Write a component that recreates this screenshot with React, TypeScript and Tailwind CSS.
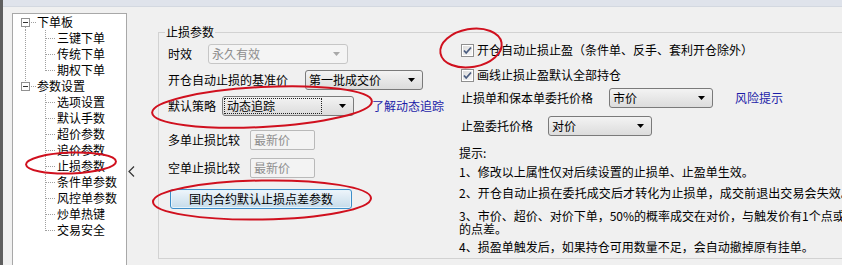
import React from "react";

const tree = [
    { label: "下单板", children: ["三键下单", "传统下单", "期权下单"] },
    {
        label: "参数设置",
        children: ["选项设置", "默认手数", "超价参数", "追价参数", "止损参数", "条件单参数", "风控单参数", "炒单热键", "交易安全"],
    },
];

const RootConnector: React.FC<{ first: boolean; last: boolean }> = ({ first, last }) => (
    <svg width="24" height="16" className="shrink-0">
        {!first && <line x1="12.5" y1="0" x2="12.5" y2="4" stroke="#a0a0a0" strokeDasharray="1 1" />}
        {!last && <line x1="12.5" y1="13" x2="12.5" y2="16" stroke="#a0a0a0" strokeDasharray="1 1" />}
        <rect x="8.5" y="4.5" width="8" height="8" fill="#fff" stroke="#919191" />
        <line x1="10" y1="8.5" x2="15" y2="8.5" stroke="#333" />
        <line x1="18" y1="8.5" x2="24" y2="8.5" stroke="#a0a0a0" strokeDasharray="1 1" />
    </svg>
);

const ChildConnector: React.FC<{ rootLine: boolean; last: boolean }> = ({ rootLine, last }) => (
    <svg width="44" height="16" className="shrink-0">
        {rootLine && <line x1="12.5" y1="0" x2="12.5" y2="16" stroke="#a0a0a0" strokeDasharray="1 1" />}
        <line x1="32.5" y1="0" x2="32.5" y2={last ? 9 : 16} stroke="#a0a0a0" strokeDasharray="1 1" />
        <line x1="33" y1="8.5" x2="43" y2="8.5" stroke="#a0a0a0" strokeDasharray="1 1" />
    </svg>
);

const Arrow: React.FC<{ color?: string }> = ({ color = "#000" }) => (
    <svg width="7" height="4" className="shrink-0">
        <path d="M0 0 H7 L3.5 4 Z" fill={color} />
    </svg>
);

const Combo: React.FC<{ className: string; text: string; disabled?: boolean; focused?: boolean }> = ({
    className,
    text,
    disabled,
    focused,
}) => (
    <div
        className={`flex h-[20px] items-center rounded-[3px] border pr-[7px] ${className} ${
            disabled
                ? "border-[#c6c6c6] bg-[#f4f4f4] text-[#8e8e8e]"
                : "border-[#7a7a7a] bg-linear-to-b from-[#f3f3f3] to-[#dcdcdc] text-black"
        }`}
    >
        {focused ? (
            <div className="ml-[1px] mr-[17px] flex h-[16px] flex-1 items-center border border-dotted border-[#222] pl-[2px]">
                {text}
            </div>
        ) : (
            <div className="flex-1 pl-[3px]">{text}</div>
        )}
        <Arrow color={disabled ? "#a8a8a8" : "#000"} />
    </div>
);

const Field: React.FC<{ text: string }> = ({ text }) => (
    <div className="flex h-[20px] w-[65px] items-center rounded-[2px] border border-[#b9b9b9] bg-[#f3f3f3] pl-[3px] text-[#8e8e8e]">
        {text}
    </div>
);

const Check: React.FC = () => (
    <svg width="13" height="13" className="shrink-0">
        <defs>
            <linearGradient id="cb" x1="0" y1="0" x2="1" y2="1">
                <stop offset="0" stopColor="#dcdcdc" />
                <stop offset="1" stopColor="#f6f6f6" />
            </linearGradient>
        </defs>
        <rect x="0.5" y="0.5" width="12" height="12" fill="#fff" stroke="#8f8f8f" />
        <rect x="2" y="2" width="9" height="9" fill="url(#cb)" />
        <path d="M3 6.5 L5.2 9 L10 3.5" fill="none" stroke="#4b5d80" strokeWidth="1.8" />
    </svg>
);

export default function App() {
    return (
        <div className="relative flex h-[265px] w-[842px] overflow-hidden bg-[#f0f0f0] font-['Noto_Sans_CJK_SC',sans-serif] text-[12px] leading-[16px] text-black">
            <div className="h-full w-[3px] shrink-0 bg-[#5e5e5e]" />
            <div className="flex flex-1 flex-col">
                <div className="h-[7px] shrink-0 border-b border-[#d3d8e0] bg-[#dfe3eb]" />
                <div className="flex flex-1 items-start">
                    {/* tree */}
                    <div className="ml-[9px] mt-[6px] h-[252px] w-[115px] shrink-0 border border-b-0 border-[#a8a8a8] bg-white">
                        {tree.map((root, ri) => (
                            <div key={root.label}>
                                <div className="flex h-[16px] items-center">
                                    <RootConnector first={ri === 0} last={ri === tree.length - 1} />
                                    <span className="whitespace-nowrap">{root.label}</span>
                                </div>
                                {root.children.map((c, ci) => (
                                    <div key={c} className="flex h-[16px] items-center">
                                        <ChildConnector rootLine={ri < tree.length - 1} last={ci === root.children.length - 1} />
                                        <span className="whitespace-nowrap">{c}</span>
                                    </div>
                                ))}
                            </div>
                        ))}
                    </div>

                    {/* splitter arrow */}
                    <div className="flex w-[31px] shrink-0 flex-col pl-[1px] pt-[159px]">
                        <svg width="7" height="11">
                            <polyline points="6,0.5 1,5.5 6,10.5" fill="none" stroke="#333" strokeWidth="1.2" />
                        </svg>
                    </div>

                    {/* group box */}
                    <div className="relative mt-[25px] flex h-[227px] w-[700px] shrink-0 border border-r-0 border-[#d2d2d2]">
                        <span className="absolute -top-[9px] left-[6px] bg-[#f0f0f0] px-[1px]">止损参数</span>

                        <div className="flex w-[299px] shrink-0 flex-col pl-[9px]">
                            <div className="mt-[11px] flex h-[20px] items-center">
                                <span className="w-[40px]">时效</span>
                                <Combo className="w-[140px]" text="永久有效" disabled />
                            </div>
                            <div className="mt-[6px] flex h-[20px] items-center">
                                <span className="w-[137px]">开仓自动止损的基准价</span>
                                <Combo className="w-[118px]" text="第一批成交价" />
                            </div>
                            <div className="mt-[6px] flex h-[20px] items-center whitespace-nowrap">
                                <span className="w-[54px]">默认策略</span>
                                <Combo className="w-[132px]" text="动态追踪" focused />
                                <span className="ml-[18px] text-[#1c1ca8]">了解动态追踪</span>
                            </div>
                            <div className="mt-[14px] flex h-[20px] items-center">
                                <span className="w-[82px]">多单止损比较</span>
                                <Field text="最新价" />
                            </div>
                            <div className="mt-[8px] flex h-[20px] items-center">
                                <span className="w-[82px]">空单止损比较</span>
                                <Field text="最新价" />
                            </div>
                            <button className="ml-[2px] mt-[11px] flex h-[20px] w-[182px] items-center justify-center rounded-[3px] border border-[#3d8ec9] bg-linear-to-b from-[#eef5fb] to-[#c6dcea] text-black shadow-[inset_0_0_0_1px_#e6f4fc]">
                                国内合约默认止损点差参数
                            </button>
                        </div>

                        <div className="flex flex-1 flex-col whitespace-nowrap pl-[1px]">
                            <div className="ml-[2px] mt-[9px] flex h-[16px] items-center gap-[3px]">
                                <Check />
                                <span>开仓自动止损止盈（条件单、反手、套利开仓除外）</span>
                            </div>
                            <div className="ml-[2px] mt-[9px] flex h-[16px] items-center gap-[3px]">
                                <Check />
                                <span>画线止损止盈默认全部持仓</span>
                            </div>
                            <div className="mt-[5px] flex h-[20px] items-center pl-[2px]">
                                <span className="w-[148px]">止损单和保本单委托价格</span>
                                <Combo className="w-[104px]" text="市价" />
                                <span className="ml-[22px] text-[#1c1ca8]">风险提示</span>
                            </div>
                            <div className="mt-[8px] flex h-[20px] items-center pl-[2px]">
                                <span className="w-[87px]">止盈委托价格</span>
                                <Combo className="w-[104px]" text="对价" />
                            </div>
                            <div className="mt-[11px] leading-[12px]">提示:</div>
                            <div className="mt-[7px] leading-[12px]">1、修改以上属性仅对后续设置的止损单、止盈单生效。</div>
                            <div className="mt-[9px] leading-[12px] tracking-[0.1px]">2、开仓自动止损在委托成交后才转化为止损单，成交前退出交易会失效。</div>
                            <div className="mt-[10px] leading-[13px]">
                                <div>3、市价、超价、对价下单，50%的概率成交在对价，与触发价有1个点或2个点</div>
                                <div>的点差。</div>
                            </div>
                            <div className="mt-[6px] leading-[12px]">4、损盈单触发后，如果持仓可用数量不足，会自动撤掉原有挂单。</div>
                        </div>
                    </div>
                </div>
            </div>

            {/* red annotation marks */}
            <svg className="pointer-events-none absolute left-0 top-0" width="842" height="265">
                <g fill="none" stroke="#d0101e" strokeWidth="2">
                    <ellipse cx="71" cy="163" rx="45" ry="10.5" transform="rotate(-2 71 163)" />
                    <ellipse cx="262" cy="107" rx="110" ry="20" transform="rotate(-3 262 107)" />
                    <ellipse cx="262" cy="200" rx="109" ry="19.5" transform="rotate(-1 262 200)" />
                    <ellipse cx="471" cy="48" rx="31" ry="19" transform="rotate(-10 471 48)" />
                </g>
            </svg>
        </div>
    );
}
